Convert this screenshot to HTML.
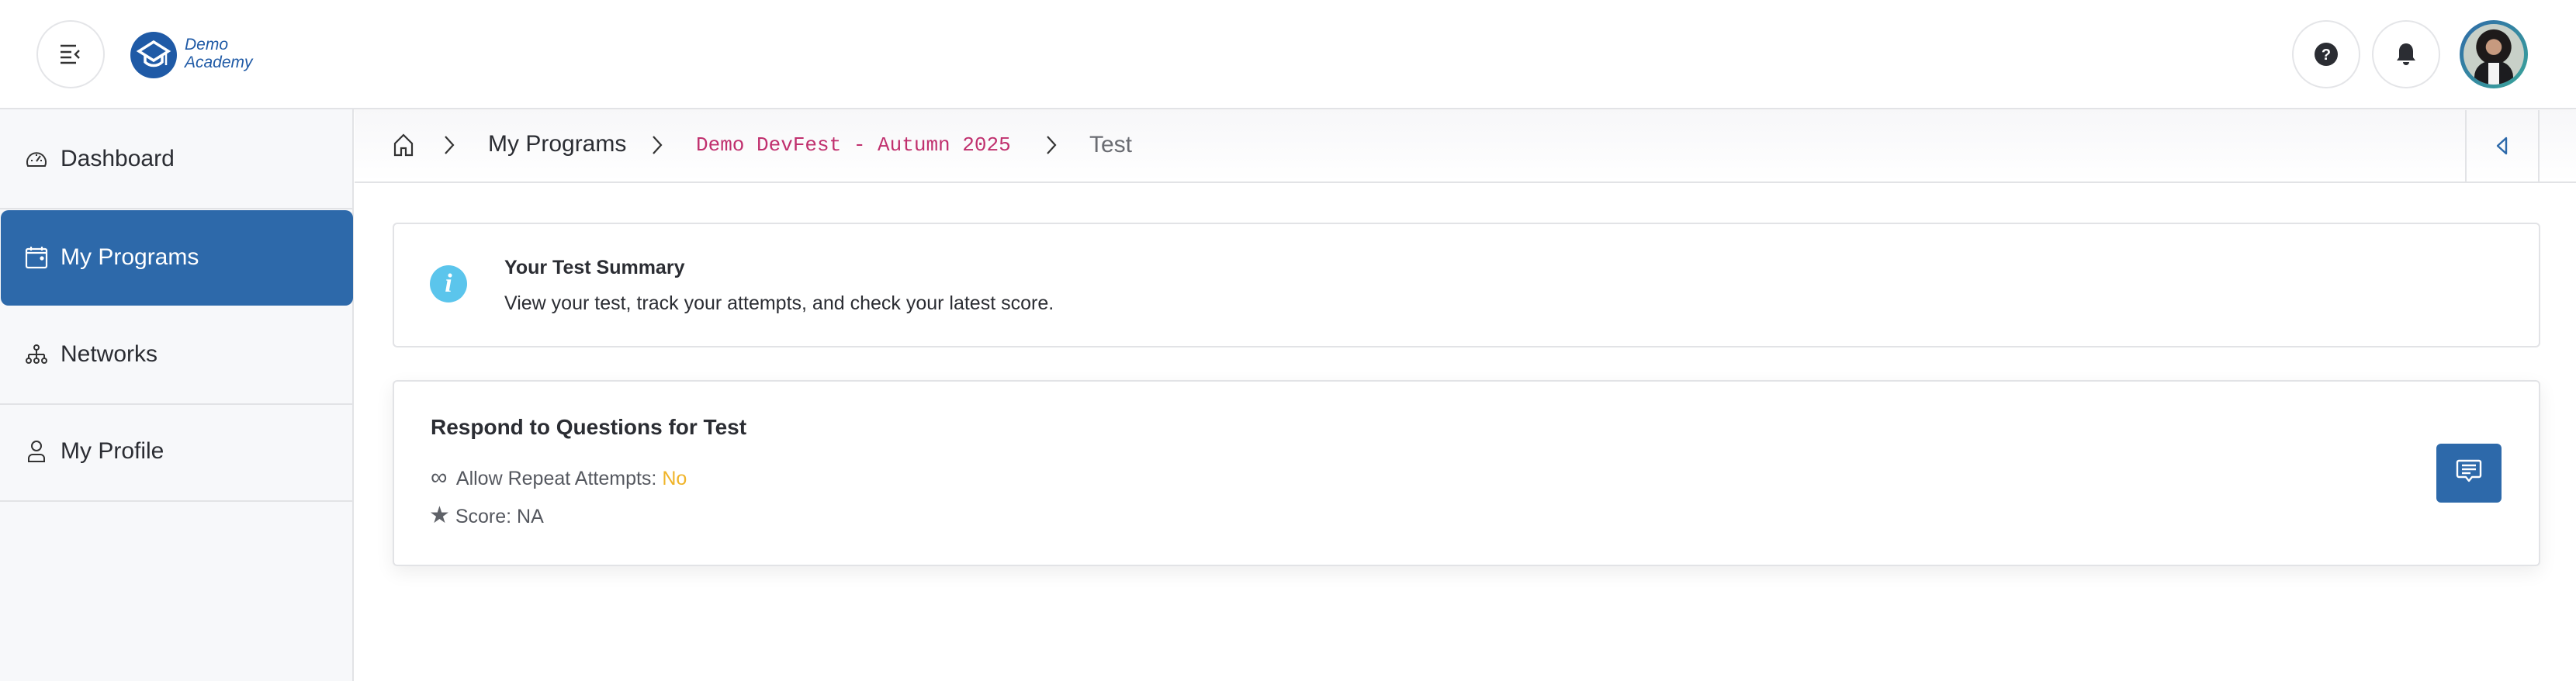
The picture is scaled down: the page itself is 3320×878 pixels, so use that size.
<!DOCTYPE html>
<html><head><meta charset="utf-8"><style>
*{box-sizing:border-box;margin:0;padding:0}
body{width:3320px;height:878px;overflow:hidden;background:#fff;font-family:"Liberation Sans",sans-serif;color:#2b2d33;position:relative}
.abs{position:absolute}
.circ{position:absolute;width:88px;height:88px;border:2px solid #e4e5e8;border-radius:50%;background:#fff}
.header{left:0;top:0;width:3320px;height:141px;background:#fff;border-bottom:2px solid #e2e3e6;box-shadow:0 2px 6px rgba(0,0,0,.04)}
.side{left:0;top:141px;width:456px;height:737px;background:#f7f8fa;border-right:2px solid #e2e3e6}
.item{position:absolute;left:0;width:455px;font-size:30px;color:#2b2d33;display:flex;align-items:center;padding-left:32px}
.item svg{margin-right:16px}
.line{position:absolute;left:0;width:455px;height:2px;background:#e2e3e6}
.bc{left:457px;top:142px;width:2863px;height:94px;background:linear-gradient(#f7f7f9,#fff);border-bottom:2px solid #e2e3e6;font-size:30px}
.card{position:absolute;background:#fff;border:2px solid #e2e3e6;border-radius:6px}
</style></head><body>
<div class="abs header"></div>
<div class="circ" style="left:47px;top:26px"></div>
<svg class="abs" style="left:76px;top:56px" width="30" height="28" viewBox="0 0 30 28" fill="none" stroke="#333" stroke-width="2.4"><path d="M2 3h20M2 11h14M2 18h14M2 25h20M26 9l-5 5 5 5"/></svg>
<svg class="abs" style="left:167px;top:40px" width="62" height="62" viewBox="0 0 62 62"><circle cx="31" cy="31" r="30" fill="#1f5aa6"/><path d="M31 14 L50 26 L31 38 L12 26 Z" fill="none" stroke="#fff" stroke-width="3.5"/><path d="M20 31v9c6 6 16 6 22 0v-9" fill="none" stroke="#fff" stroke-width="3.5"/><path d="M47 28v16" stroke="#fff" stroke-width="2.5"/></svg>
<div class="abs" style="left:238px;top:46px;font-size:21px;font-style:italic;color:#1f5aa6;line-height:23px">Demo<br>Academy</div>
<div class="circ" style="left:2954px;top:26px"></div>
<svg class="abs" style="left:2983px;top:55px" width="30" height="30" viewBox="0 0 30 30"><circle cx="15" cy="15" r="15" fill="#2b2d33"/><text x="15" y="22" text-anchor="middle" font-family="Liberation Sans" font-weight="bold" font-size="20" fill="#fff">?</text></svg>
<div class="circ" style="left:3057px;top:26px"></div>
<svg class="abs" style="left:3087px;top:54px" width="28" height="32" viewBox="0 0 28 32"><path d="M14 2c-6 0-9 5-9 10v8l-3 4h24l-3-4v-8c0-5-3-10-9-10z" fill="#2b2d33"/><path d="M10 26a4 4 0 0 0 8 0z" fill="#2b2d33"/></svg>
<div class="abs" style="left:3170px;top:26px;width:88px;height:88px;border-radius:50%;background:linear-gradient(135deg,#2f6aa8,#3aa59a);padding:5px"><div style="width:100%;height:100%;border-radius:50%;background:radial-gradient(circle at 50% 38%,#c79a7f 0 16%,#1e1a1a 17% 36%,#c8d0c8 37%),#aab;overflow:hidden;position:relative"><div style="position:absolute;left:14px;top:48px;width:50px;height:40px;background:#1c1c1f;border-radius:20px 20px 0 0"></div><div style="position:absolute;left:32px;top:50px;width:14px;height:30px;background:#f4f4f4"></div></div></div>

<div class="abs side"></div>
<div class="item" style="top:180px;height:50px"><svg width="30" height="26" viewBox="0 0 30 26" fill="none" stroke="#333" stroke-width="2"><path d="M4 22a12 12 0 1 1 22 0z"/><path d="M15 16l5-7"/><path d="M8 15h2M20 15h2M15 7v2"/></svg>Dashboard</div>
<div class="line" style="top:268px"></div>
<div class="abs" style="left:1px;top:271px;width:454px;height:123px;background:#2d69aa;border-radius:10px"></div>
<div class="item" style="top:307px;height:50px;color:#fff"><svg width="30" height="30" viewBox="0 0 30 30" fill="none" stroke="#fff" stroke-width="2.2"><rect x="2" y="4" width="26" height="24" rx="2"/><path d="M2 9h26M8 1v5M22 1v5"/><circle cx="22" cy="16" r="1.5" fill="#fff"/></svg>My Programs</div>
<div class="item" style="top:432px;height:50px"><svg width="30" height="26" viewBox="0 0 30 26" fill="none" stroke="#333" stroke-width="2"><circle cx="15" cy="4" r="3"/><path d="M15 7v6M5 13h20M5 13v5M15 13v5M25 13v5"/><circle cx="5" cy="21" r="3"/><circle cx="15" cy="21" r="3"/><circle cx="25" cy="21" r="3"/></svg>Networks</div>
<div class="line" style="top:520px"></div>
<div class="item" style="top:557px;height:50px"><svg width="30" height="30" viewBox="0 0 30 30" fill="none" stroke="#333" stroke-width="2"><circle cx="15" cy="8" r="6"/><path d="M5 28v-4a5 5 0 0 1 5-5h10a5 5 0 0 1 5 5v4z"/></svg>My Profile</div>
<div class="line" style="top:645px"></div>

<div class="abs bc"></div>
<svg class="abs" style="left:506px;top:172px" width="28" height="30" viewBox="0 0 28 30" fill="none" stroke="#333" stroke-width="2.2"><path d="M3 13L14 2l11 11v15h-8v-9h-6v9H3z"/></svg>
<svg class="abs" style="left:572px;top:174px" width="14" height="26" viewBox="0 0 14 26" fill="none" stroke="#333" stroke-width="2.2"><path d="M2 2l10 11L2 24"/></svg>
<div class="abs" style="left:629px;top:169px;font-size:30px;color:#2b2d33">My Programs</div>
<svg class="abs" style="left:840px;top:174px" width="14" height="26" viewBox="0 0 14 26" fill="none" stroke="#333" stroke-width="2.2"><path d="M2 2l10 11L2 24"/></svg>
<div class="abs" style="left:897px;top:172px;font-size:26px;color:#c0306e;font-family:'Liberation Mono',monospace">Demo DevFest - Autumn 2025</div>
<svg class="abs" style="left:1348px;top:174px" width="14" height="26" viewBox="0 0 14 26" fill="none" stroke="#333" stroke-width="2.2"><path d="M2 2l10 11L2 24"/></svg>
<div class="abs" style="left:1404px;top:170px;font-size:30px;color:#6a6c72">Test</div>
<div class="abs" style="left:3177px;top:142px;width:96px;height:94px;border-left:2px solid #e2e3e6;border-right:2px solid #e2e3e6"></div>
<svg class="abs" style="left:3216px;top:175px" width="16" height="26" viewBox="0 0 16 26" fill="none" stroke="#2d69aa" stroke-width="2.4" stroke-linejoin="round"><path d="M14 3L3 13l11 10z"/></svg>

<div class="card" style="left:506px;top:287px;width:2768px;height:161px"></div>
<div class="abs" style="left:554px;top:342px;width:48px;height:48px;border-radius:50%;background:#5bc5ec;color:#fff;font:italic bold 34px 'Liberation Serif',serif;text-align:center;line-height:48px">i</div>
<div class="abs" style="left:650px;top:331px;font-size:25px;font-weight:bold;color:#2b2d33">Your Test Summary</div>
<div class="abs" style="left:650px;top:377px;font-size:25px;color:#2b2d33">View your test, track your attempts, and check your latest score.</div>

<div class="card" style="left:506px;top:490px;width:2768px;height:240px;box-shadow:0 8px 24px rgba(0,0,0,.07)"></div>
<div class="abs" style="left:555px;top:535px;font-size:28px;font-weight:bold;color:#2b2d33">Respond to Questions for Test</div>
<div class="abs" style="left:555px;top:603px;font-size:25px;color:#55585f"><span style="font-size:30px;letter-spacing:-1px;line-height:25px">∞</span>&nbsp; Allow Repeat Attempts: <span style="color:#f0b429">No</span></div>
<div class="abs" style="left:553px;top:652px;font-size:25px;color:#55585f"><span style="color:#5f6268;font-size:30px;line-height:25px">★</span> Score: NA</div>
<div class="abs" style="left:3140px;top:572px;width:84px;height:76px;background:#2d69aa;border-radius:6px"></div>
<svg class="abs" style="left:3165px;top:591px" width="34" height="36" viewBox="0 0 34 36" fill="none" stroke="#fff" stroke-width="2.4" stroke-linejoin="round"><path d="M4 3h26a2 2 0 0 1 2 2v17a2 2 0 0 1-2 2H21l-4 5-4-5H4a2 2 0 0 1-2-2V5a2 2 0 0 1 2-2z"/><path d="M8 9h18M8 14h18M8 19h11"/></svg>
</body></html>
